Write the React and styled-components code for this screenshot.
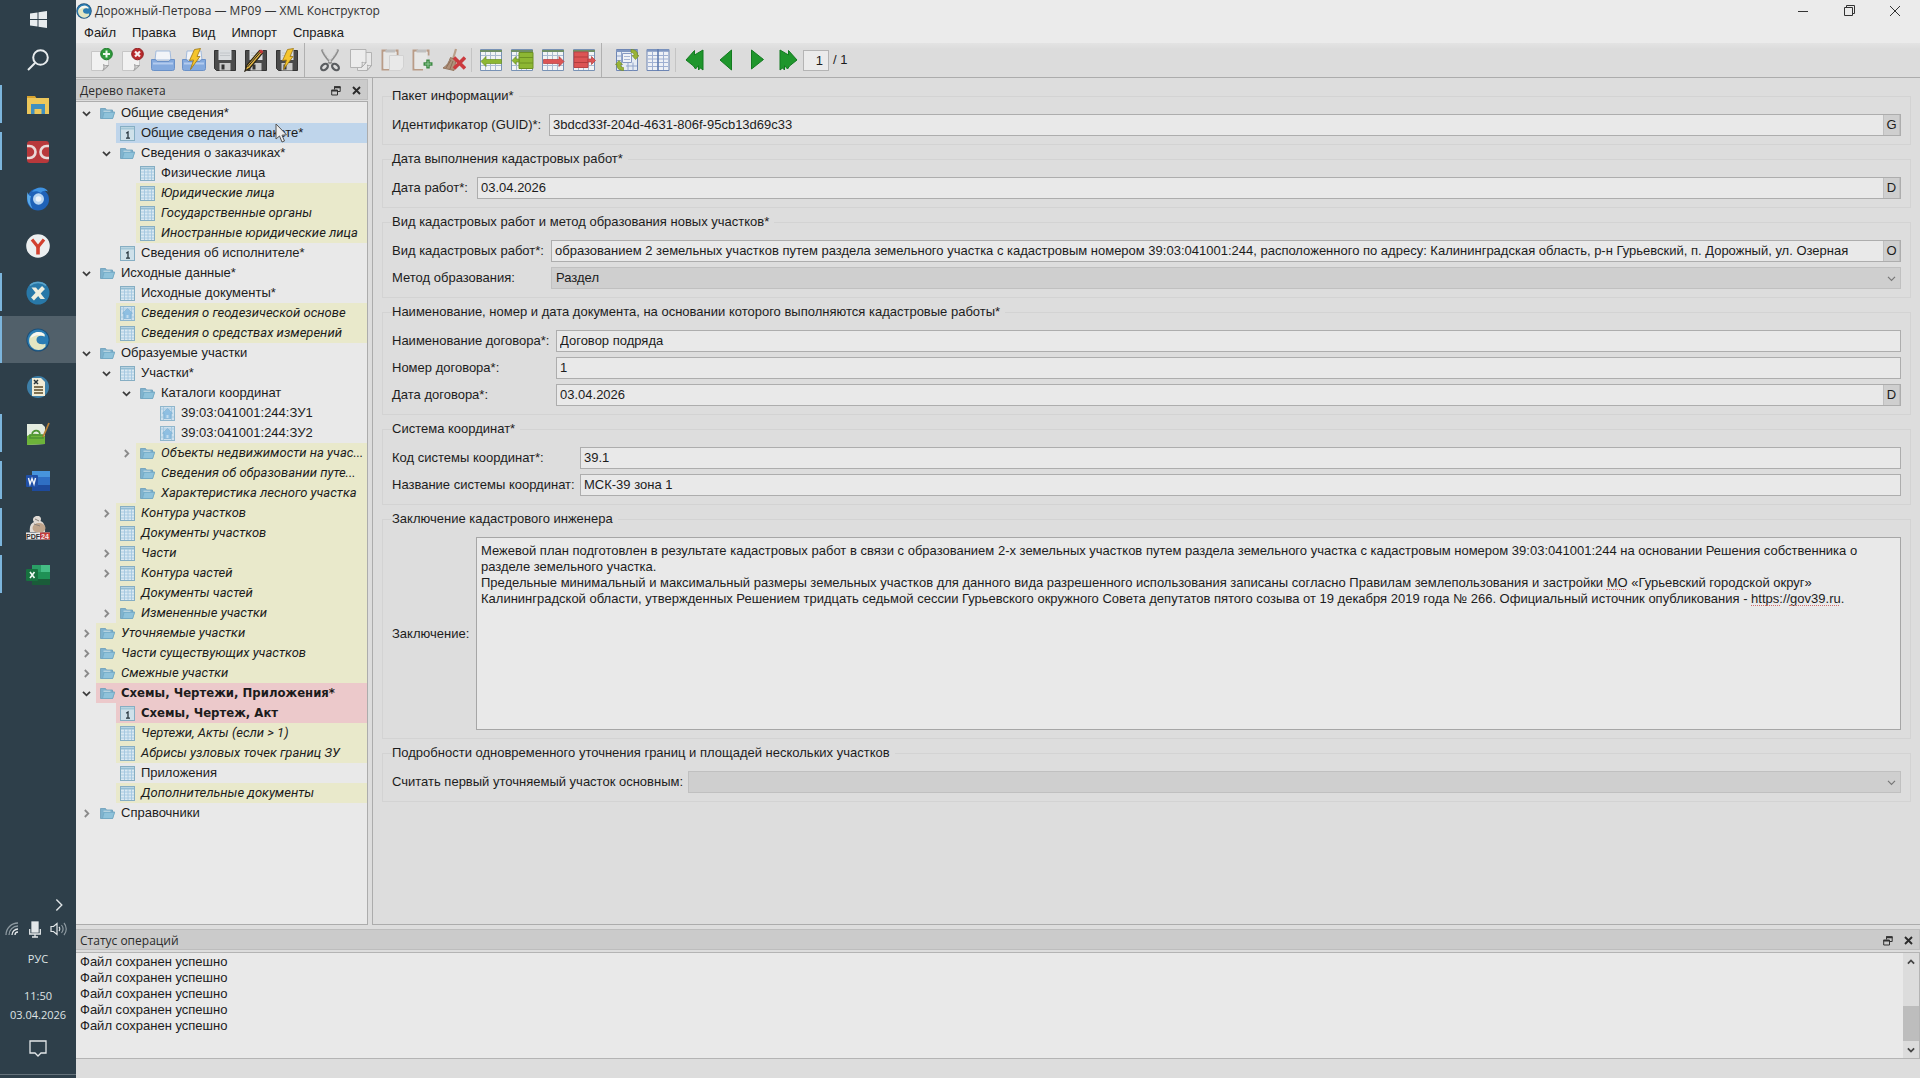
import React, { useState } from "react";
import styled, { createGlobalStyle, css } from "styled-components";

const GlobalStyle = createGlobalStyle`
  * {
    box-sizing: border-box;
  }
  body {
    margin: 0;
    background: #dddddd;
    color: #1c1c1c;
    font-family: "Liberation Sans", Arial, sans-serif;
    font-size: 13px;
    line-height: 16px;
  }
  button, input, select, textarea {
    font: inherit;
    color: inherit;
    margin: 0;
  }
  button {
    border: 0;
    padding: 0;
    background: none;
  }
  svg {
    display: block;
    flex: none;
  }
`;

const Desktop = styled.div`
  display: flex;
  height: 100vh;
  overflow: hidden;
`;

/* ---------- taskbar ---------- */

const Taskbar = styled.nav`
  width: 76px;
  flex: none;
  display: flex;
  flex-direction: column;
  background: #2e3f4a;
  color: #dfe3e5;
  font-family: "Open Sans", "Noto Sans", sans-serif;
  font-size: 11px;
`;

const TaskButton = styled.button`
  position: relative;
  width: 100%;
  height: ${(p) => p.$height || 47}px;
  display: flex;
  align-items: center;
  justify-content: center;
  background: ${(p) => (p.$state === "active" ? "#51606a" : "transparent")};

  ${(p) =>
    p.$state &&
    css`
      &::before {
        content: "";
        position: absolute;
        left: 0;
        top: ${p.$state === "active" ? 0 : 4}px;
        bottom: ${p.$state === "active" ? 0 : 5}px;
        width: 2px;
        background: #7cb5dc;
      }
    `}
`;

const Tray = styled.div`
  margin-top: auto;
  display: flex;
  flex-direction: column;
  align-items: center;
  padding-bottom: 10px;
  border-bottom: 1px solid #64717a;
  margin-bottom: 3px;
`;

const TrayMore = styled.button`
  align-self: flex-end;
  margin-right: 10px;
  height: 16px;
`;

const TrayIcons = styled.div`
  width: 100%;
  height: 32px;
  display: flex;
  align-items: center;
  justify-content: space-between;
  padding: 0 9px 0 5px;
`;

const Lang = styled.button`
  height: 28px;
`;

const Clock = styled.div`
  display: flex;
  flex-direction: column;
  align-items: center;
  gap: 3px;
  padding: 15px 0 9px;
`;

/* ---------- window frame ---------- */

const Window = styled.div`
  flex: 1;
  min-width: 0;
  display: flex;
  flex-direction: column;
`;

const TitleBar = styled.header`
  height: 21px;
  display: flex;
  align-items: center;
  gap: 3px;
  background: #ebebeb;
  font-family: "Open Sans", "Noto Sans", sans-serif;
  font-size: 12px;
  color: #333;
`;

const WindowButtons = styled.div`
  display: flex;
  margin-left: auto;
  padding-right: 2px;

  button {
    width: 46px;
    height: 20px;
    display: grid;
    place-items: center;
  }
`;

const MenuBar = styled.nav`
  height: 22px;
  display: flex;
  background: #ebebeb;

  button {
    padding: 1px 8px 0;
  }
`;

const Toolbar = styled.div`
  height: 35px;
  display: flex;
  align-items: center;
  padding-left: 9px;
  background: linear-gradient(#e3e3e3, #dcdcdc 6px);
  border-bottom: 1px solid #acacac;
`;

const Tool = styled.button`
  width: 31px;
  height: 31px;
  display: grid;
  place-items: center;
`;

const Divider = styled.span`
  width: 1px;
  height: ${(p) => (p.$tall ? 34 : 24)}px;
  margin: 0 ${(p) => (p.$tall ? 9 : 3)}px 0 2px;
  background: ${(p) => (p.$tall ? "#b0b0b0" : "#c4c4c4")};
`;

const PageBox = styled.label`
  display: flex;
  align-items: center;
  gap: 4px;
  font-size: 13px;

  input {
    width: 26px;
    height: 21px;
    padding: 0 5px;
    text-align: right;
    background: #ebebeb;
    border: 1px solid #b4b4b4;
  }
`;

const Workspace = styled.div`
  flex: 1;
  min-height: 0;
  display: flex;
  gap: 4px;
`;

const Dock = styled.section`
  display: flex;
  flex-direction: column;
  gap: 1px;
  ${(p) =>
    p.$side
      ? css`
          width: 292px;
          flex: none;
          padding-top: 1px;
        `
      : css`
          height: 130px;
          flex: none;
          margin-top: 4px;
        `}
`;

const DockTitle = styled.div`
  height: 21px;
  flex: none;
  display: flex;
  align-items: center;
  padding: 2px 0 0 4px;
  background: #cbcbcb;
  border: 1px solid #bdbdbd;
  border-left: 0;
  font-family: "Open Sans", "Noto Sans", sans-serif;
  font-size: 12px;
  color: #2b2b2b;

  span {
    flex: 1;
  }
  button {
    width: 21px;
    height: 16px;
    display: grid;
    place-items: center;
  }
`;

/* ---------- tree ---------- */

const Tree = styled.ul`
  flex: 1;
  min-height: 0;
  margin: 0;
  padding: 1px 0 0;
  list-style: none;
  overflow: hidden;
  background: #e9e9e9;
  border: 1px solid #acacac;
  border-left: 0;
`;

const TreeItem = styled.li`
  height: 20px;
  display: flex;
  padding-left: ${(p) => p.$level * 20}px;
`;

const Toggle = styled.button`
  width: 20px;
  flex: none;
  display: grid;
  place-items: center;
`;

const tones = {
  optional: css`
    background: #e9e9cb;
    font-family: Roboto, "Liberation Sans", sans-serif;
    font-style: italic;
  `,
  selected: css`
    background: #bfd5eb;
  `,
  error: css`
    background: #ecc9cb;
    font-family: "DejaVu Sans Condensed", "DejaVu Sans", sans-serif;
    font-weight: bold;
  `,
};

const TreeCell = styled.span`
  flex: 1;
  min-width: 0;
  display: flex;
  align-items: center;
  gap: 6px;
  padding-left: 4px;
  white-space: nowrap;
  overflow: hidden;
  ${(p) => tones[p.$tone]}
`;

/* ---------- form ---------- */

const FormPane = styled.main`
  flex: 1;
  min-width: 0;
  display: flex;
  flex-direction: column;
  gap: 6px;
  padding: 10px 9px 0;
  background: #dddddd;
  border-left: 1px solid #acacac;
  border-bottom: 1px solid #acacac;
`;

const Group = styled.fieldset`
  margin: 0;
  min-width: 0;
  padding: 10px 9px 8px;
  border: 1px solid #d3d3d3;
`;

const Legend = styled.legend`
  padding: 0 5px 0 0;
`;

const Fields = styled.div`
  display: grid;
  grid-template-columns: ${(p) => p.$label}px 1fr;
  row-gap: 5px;
  align-items: center;
`;

const Field = styled.div`
  height: 22px;
  display: flex;
  background: #e9e9e9;
  border: 1px solid #adadad;

  input {
    flex: 1;
    min-width: 0;
    padding: 0 3px;
    border: 0;
    background: none;
    outline: none;
  }
  button {
    width: 17px;
    background: #cfcfcf;
    border: 1px solid #c0c0c0;
    border-width: 0 1px;
  }
`;

const SelectBox = styled.div`
  position: relative;

  select {
    width: 100%;
    height: 22px;
    display: block;
    padding: 0 20px 0 4px;
    appearance: none;
    background: #cfcfcf;
    border: 1px solid #c0c0c0;
    border-radius: 0;
    opacity: 1;
  }
  svg {
    position: absolute;
    right: 5px;
    top: 7px;
    pointer-events: none;
  }
`;

const NoteBox = styled.div`
  position: relative;

  textarea {
    width: 100%;
    height: 193px;
    display: block;
    padding: 5px 4px;
    resize: none;
    outline: none;
    background: #e9e9e9;
    border: 1px solid #a6a6a6;
    border-radius: 0;
  }
`;

const SpellMark = styled.i`
  position: absolute;
  left: ${(p) => p.$left}px;
  top: ${(p) => p.$line * 16 + 20}px;
  width: ${(p) => p.$width}px;
  border-bottom: 1px dotted #d06a6a;
  pointer-events: none;
`;

/* ---------- log ---------- */

const LogBox = styled.div`
  flex: 1;
  min-height: 0;
  display: flex;
  margin-top: 1px;
  background: #e9e9e9;
  border: 1px solid #b4b4b4;
  border-left: 0;
`;

const Log = styled.ul`
  flex: 1;
  margin: 0;
  padding: 1px 4px;
  list-style: none;
`;

const ScrollBar = styled.div`
  width: 16px;
  display: flex;
  flex-direction: column;
  background: #dcdcdc;

  button {
    height: 17px;
    display: grid;
    place-items: center;
  }
`;

const Thumb = styled.div`
  height: 35px;
  margin-top: auto;
  background: #bdbdbd;
`;

const StatusBar = styled.footer`
  height: 19px;
  flex: none;
  background: #dddddd;
`;

const Pointer = styled.svg`
  position: absolute;
  left: 275px;
  top: 123px;
`;

/* ---------- small icons ---------- */

const Chevron = ({ dir = "down", size = 9, color = "#444", weight = 2 }) => {
  const turn = { down: 0, right: -90, up: 180 }[dir];
  return (
    <svg width={size} height={size} viewBox="0 0 9 9" fill="none">
      <path d="M1 2.8 4.5 6.3 8 2.8" stroke={color} strokeWidth={weight} transform={`rotate(${turn} 4.5 4.5)`} />
    </svg>
  );
};

const FloatIcon = () => (
  <svg width="10" height="10" viewBox="0 0 10 10" fill="none" stroke="#333">
    <path d="M3.5 3.5V.8h5.7v4.7H6.8" />
    <path d="M3 1.2h6.5M.5 4.6h6" strokeWidth="2" />
    <path d="M.7 4v5h5.8V4" />
  </svg>
);

const CrossIcon = () => (
  <svg width="9" height="9" viewBox="0 0 9 9" stroke="#2b2b2b" strokeWidth="1.9">
    <path d="M1 1l7 7M8 1 1 8" />
  </svg>
);

const FolderIcon = () => (
  <svg width="15" height="15" viewBox="0 0 15 15">
    <path d="M.5 12.5v-10h5l1 1.5h6V6h2L12.5 12.5z" fill="#7fb2cd" stroke="#6a9db9" strokeWidth=".8" />
    <path d="M2.5 12.5 4 6.3h10.6l-2 6.2z" fill="#8fc2da" stroke="#6fa6c2" strokeWidth=".7" />
    <path d="M3.5 5.2h7" stroke="#cfe2ea" />
  </svg>
);

const TableIcon = () => (
  <svg width="15" height="15" viewBox="0 0 15 15">
    <rect x=".5" y=".5" width="14" height="14" fill="#dbe9f2" stroke="#86aec3" />
    <path d="M1 2.5h13" stroke="#93bdd2" strokeWidth="2" />
    <path d="M4.5 3v11M8 3v11M11.5 3v11M1 6h13M1 9h13M1 12h13" stroke="#a3c6e0" strokeWidth=".9" />
  </svg>
);

const PageIcon = () => (
  <svg width="15" height="15" viewBox="0 0 15 15">
    <rect x=".5" y=".5" width="14" height="14" fill="#cfe1ea" stroke="#86aec3" />
    <path d="M1 2.5h13" stroke="#a5c8d8" strokeWidth="2" />
    <path d="M6.2 7.2 8 6v6M6 12.2h4" stroke="#26343c" strokeWidth="1.3" fill="none" />
  </svg>
);

const HouseIcon = () => (
  <svg width="15" height="15" viewBox="0 0 15 15">
    <rect x=".5" y=".5" width="14" height="14" fill="#cfe1ee" stroke="#8fb6cc" />
    <path d="M1 3h13M1 11h13M3.5 1v13M11.5 1v13" stroke="#a6cae2" />
    <path d="M7.5 2.500 12.500 7.200h-1.500V12.500h-7V7.200H2.500z" fill="#8fbfe2" stroke="#7bacd0" strokeWidth=".6" />
    <path d="M6.500 9h2v3h-2z" fill="#c3dcee" />
  </svg>
);

const CLogo = ({ size }) => (
  <svg width={size} height={size} viewBox="0 0 24 24">
    <circle cx="12" cy="12" r="11.6" fill="#1c4f78" />
    <circle cx="12" cy="12" r="10.6" fill="#2b7db4" />
    <path d="M18.500 6.500C14 2 5 4 3.200 11c-1 6 3.500 11 9.500 11 2.500 0 5-1 6.800-3.500v-2.800c-5 1.500-9-.2-9-3.900s3.800-5 8-3.300z" fill="#e3e6c2" />
    <path d="M18.500 6.500C14 2 6.500 4 4.500 10c5-2 5-3 8.500-2.500 2-.5 3.500-.3 5.500.9z" fill="#f6f7f2" />
  </svg>
);

/* ---------- toolbar icons, 24x24 ---------- */

const Icon24 = ({ children }) => (
  <svg width="24" height="24" viewBox="0 0 24 24">
    {children}
  </svg>
);

const Paper = () => (
  <>
    <path d="M2.500 3.500h17V18l-5 4.500h-12z" fill="#f1f1f1" stroke="#c6c6c6" />
    <path d="M19.500 17.500c-2 .5-4 0-5-1 .8 2 .6 4.500-.8 6z" fill="#d6d6d6" stroke="#9d9d9d" />
  </>
);

const Bolt = () => (
  <path d="M12.500 1.500 18.500.5 15 8.500h3L8.500 21.500 11.500 12 7.500 12.500z" fill="#f5c52d" stroke="#9b7413" strokeWidth=".8" />
);

const Tray24 = () => (
  <>
    <path d="M4 12 5 3h14l1 9z" fill="#f2f4f8" stroke="#a3bbdc" />
    <path d="M.5 11.500h4l1.500 2h12l1.500-2h4v9a2 2 0 0 1-2 2h-19a2 2 0 0 1-2-2z" fill="#84aade" stroke="#6a91c8" />
    <path d="M2 15.500h20" stroke="#b2cbee" strokeWidth="2" />
  </>
);

const Floppy = () => (
  <>
    <path d="M1.500 2.500h21v20h-19l-2-2z" fill="#4a4a4a" stroke="#333" />
    <path d="M5.500 2h13v10h-13z" fill="#dadde0" />
    <path d="M7 5h10M7 7.500h10" stroke="#c2c6ca" />
    <path d="M6.500 15h11v7.500h-11z" fill="#c9c9c9" />
    <path d="M8.500 16.500h3v5h-3z" fill="#333" />
  </>
);

const Clipboard = () => (
  <>
    <path d="M15.500 2.500h2v5M7 2.500H2.500v19H12" fill="none" stroke="#b99c87" strokeWidth="2" />
    <path d="M3.500 4h13v17h-13z" fill="#e7e7e6" />
    <path d="M5.500 1.500h9.500v3H5.500z" fill="#c0c0c0" />
  </>
);

const Sheet = ({ children }) => (
  <>
    <path d="M1.500 1.500h21v21h-21z" fill="#f2f4f5" stroke="#7892b5" />
    <path d="M1 3h22" stroke="#6f8f66" strokeWidth="2" />
    <path d="M6.500 4v18M11.500 4v18M16.500 4v18M2 7.500h20M2 12.500h20M2 17.500h20" stroke="#abbbd0" />
    {children}
  </>
);

const toolGroups = [
  [
    {
      name: "Новый",
      art: (
        <>
          <Paper />
          <circle cx="17.500" cy="6" r="5.800" fill="#2f9a3c" stroke="#1f7a2b" />
          <path d="M17.500 2.500v7M14 6h7" stroke="#eef8ee" strokeWidth="2" />
        </>
      ),
    },
    {
      name: "Закрыть",
      art: (
        <>
          <Paper />
          <circle cx="17.500" cy="6" r="5.800" fill="#b92a2c" stroke="#8d1c1e" />
          <path d="M15 3.500l5 5M20 3.500l-5 5" stroke="#f8eeee" strokeWidth="2.200" />
        </>
      ),
    },
    { name: "Открыть", art: <Tray24 /> },
    { name: "Быстро открыть", art: <><Tray24 /><Bolt /></> },
    { name: "Сохранить", art: <Floppy /> },
    {
      name: "Сохранить как",
      art: (
        <>
          <Floppy />
          <path d="M1 23 3 17 15.500 2.500l3 2.500L6 20z" fill="#e3b541" stroke="#2b2415" strokeWidth="1.200" />
          <path d="M14.500 3.500 17 1.500l2.500 2-2 2.500z" fill="#c2383a" />
          <path d="M3.500 19 16 4.500" stroke="#222" />
        </>
      ),
    },
    { name: "Быстро сохранить", art: <><Floppy /><Bolt /></> },
  ],
  [
    {
      name: "Вырезать",
      art: (
        <>
          <path d="M4 1.500c1 5 5 9 9.500 14M20 1.500c-1 5-5 9-9.500 14" stroke="#8e8e8e" strokeWidth="2.200" fill="none" />
          <path d="M5 2c2 5 5 8 8 12M19 2c-2 5-5 8-8 12" stroke="#d8d8d8" fill="none" />
          <ellipse cx="6.500" cy="19" rx="3.800" ry="2.600" transform="rotate(-38 6.500 19)" fill="none" stroke="#5a5d60" strokeWidth="2.200" />
          <ellipse cx="17.500" cy="19" rx="3.800" ry="2.600" transform="rotate(38 17.500 19)" fill="none" stroke="#5a5d60" strokeWidth="2.200" />
        </>
      ),
    },
    {
      name: "Копировать",
      art: (
        <>
          <path d="M8.500 4.500h14v13L18 22.500H8.500z" fill="#e9e9e9" stroke="#b3b3b3" />
          <path d="M1.500 1.500h15.500v13L12.500 19.500h-11z" fill="#ececec" stroke="#b3b3b3" />
          <path d="M17 14.500c-2 .5-3 .3-4-.5.5 2 .3 4-.5 5.500zM22.500 17.500c-2 .5-3 .3-4-.5.5 2 .3 4-.5 5.500z" fill="#f6f6f6" stroke="#a8a8a8" />
        </>
      ),
    },
    {
      name: "Вставить",
      art: (
        <>
          <Clipboard />
          <path d="M9.500 7.500h14V19l-3 3.500h-11z" fill="#e9e9e9" stroke="#d2d2d2" />
        </>
      ),
    },
    {
      name: "Вставить как новый",
      art: (
        <>
          <Clipboard />
          <path d="M17 11.500v9M12.500 16h9" stroke="#3f8b45" strokeWidth="3.500" />
          <path d="M17 13v6M14 16h6" stroke="#8fc893" />
        </>
      ),
    },
    {
      name: "Очистить",
      art: (
        <>
          <path d="M14 1l-3 10" stroke="#b9a08a" strokeWidth="2.200" />
          <path d="M8.500 9.500 14 12l-2 10.500L1 20c4-2 6-6 7.500-10.500z" fill="#b0917a" stroke="#94765f" />
          <path d="M9 12 4 20M11 13 8 21" stroke="#8d6d57" />
          <path d="M12 9.500 23 20.500M23 9.500 12 20.500" stroke="#cb3a3e" strokeWidth="3.600" />
        </>
      ),
    },
  ],
  [
    {
      name: "Вставить строку",
      art: (
        <Sheet>
          <path d="M2 13.500 7 8.500v3h15.500v4H7v3z" fill="#8db733" stroke="#6c9122" strokeWidth=".7" />
        </Sheet>
      ),
    },
    {
      name: "Добавить строки",
      art: (
        <Sheet>
          <path d="M9 4.500h14v16H9z" fill="#8db733" stroke="#6c9122" />
          <path d="M9 9.500h14M9 15h14" stroke="#6c9122" />
          <path d="M2 12.500 6 8.500v2.500h3v3H6v2.500z" fill="#8db733" stroke="#6c9122" strokeWidth=".7" />
        </Sheet>
      ),
    },
    {
      name: "Удалить строку",
      art: (
        <Sheet>
          <path d="M23 13.500 18 8.500v3H2.500v4H18v3z" fill="#dc5454" stroke="#b23d3d" strokeWidth=".7" />
        </Sheet>
      ),
    },
    {
      name: "Удалить строки",
      art: (
        <Sheet>
          <path d="M2 4h14v15.500H2z" fill="#dc5454" stroke="#b94545" />
          <path d="M2 9h14M2 14.500h14" stroke="#b23d3d" />
          <path d="M23.500 12.500l-4-4V11H16v3h3.500v2.500z" fill="#dc5454" stroke="#b23d3d" strokeWidth=".7" />
        </Sheet>
      ),
    },
  ],
  [
    {
      name: "Обновить таблицу",
      art: (
        <>
          <path d="M1.500 1.500h21v21h-21z" fill="#e6ebf3" stroke="#6e86b4" />
          <path d="M1 3h22" stroke="#7f96c0" strokeWidth="2" />
          <path d="M6.500 4v18M2 8h5M2 12.500h5M11 18h11M13 14.500v8M18 14.500v8" stroke="#92a5cb" />
          <path d="M7.500 5.500h9v9h-9z" fill="#f1f3f7" stroke="#8699c2" />
          <path d="M9 8.500h6M9 11.500h6" stroke="#a9b7d5" />
          <path d="M16 1.500c5 0 7 3 6.500 6H24l-3.500 4-3.500-4h2c0-2-1-3-3-3z" fill="#9ab436" stroke="#71881f" strokeWidth=".6" />
          <path d="M8.500 22.500c-5 0-7-3-6.500-6H.5L4 12.500l3.500 4h-2c0 2 1 3 3 3z" fill="#9ab436" stroke="#71881f" strokeWidth=".6" />
        </>
      ),
    },
    {
      name: "Таблица",
      art: (
        <>
          <path d="M1 1.500h22v21H1z" fill="#eef1f6" stroke="#6e86b4" />
          <path d="M1 2.500h22" stroke="#7f96c0" strokeWidth="2.500" />
          <path d="M6.500 4v18M17.500 4v18M2 7.500h20M2 11h20M2 14.500h20M2 18.500h20" stroke="#9fb0d2" />
          <path d="M12 1v22" stroke="#5f7bb0" strokeWidth="1.600" />
        </>
      ),
    },
  ],
  [
    { name: "Первая", art: <path d="M11.500 2.500v4.500l8.500-5v20l-2.500-2-2 2v-4.500l-3 3.500-2-3L3 12z" fill="#1f962c" stroke="#137a20" strokeLinejoin="round" /> },
    { name: "Предыдущая", art: <path d="M17.500 2v20L6 12z" fill="#1f962c" stroke="#137a20" strokeLinejoin="round" /> },
    { name: "Следующая", art: <path d="M6.500 2v19L18.500 11.500z" fill="#1f962c" stroke="#137a20" strokeLinejoin="round" /> },
    { name: "Последняя", art: <path d="M12.500 2.500v4.500L4 2v20l2.500-2 2 2v-4.500l3 3.500 2-3L21 12z" fill="#1f962c" stroke="#137a20" strokeLinejoin="round" /> },
  ],
];

/* ---------- taskbar icons ---------- */

const StartIcon = () => (
  <svg width="17" height="17" viewBox="0 0 17 17" fill="#e8ecee">
    <path d="M0 2.500 7.500 1.500V8H0zM8.500 1.300 17 0v8H8.500zM0 9h7.500v6.500L0 14.500zM8.500 9H17v8l-8.500-1.300z" />
  </svg>
);

const SearchIcon = () => (
  <svg width="22" height="22" viewBox="0 0 22 22" fill="none" stroke="#e8ecee" strokeWidth="2">
    <circle cx="13.500" cy="8.500" r="7.300" />
    <path d="M8 14 1 21" />
  </svg>
);

const tasks = [
  {
    name: "Проводник",
    state: "open",
    art: (
      <>
        <path d="M1 3h8l2 3H1z" fill="#d8a32f" />
        <path d="M1 5h22v16H1z" fill="#ecc75b" />
        <path d="M5 11h14v10h-3.500v-5h-7v5H5z" fill="#3f8fc0" />
      </>
    ),
  },
  {
    name: "DC",
    state: "open",
    art: (
      <>
        <rect x="1" y="1" width="22" height="22" rx="3" fill="#b8383b" />
        <path d="M1 6h2.500a6 6 0 0 1 0 12H1M23 6h-2.500a6 6 0 0 0 0 12H23" fill="none" stroke="#ead9d8" strokeWidth="2.600" />
      </>
    ),
  },
  {
    name: "Thunderbird",
    art: (
      <>
        <circle cx="12" cy="12.500" r="11" fill="#1f62b8" />
        <path d="M6 5C10-1 19-1 22 4.500c-3-1.500-6-.5-7 1.500-3-2-6-2-9-1z" fill="#3f93e2" />
        <path d="M1.500 5c-1 6-.5 12 5 16.500C4 17 3.500 13 5 9 3 9 2 7 1.500 5z" fill="#5aaae9" />
        <ellipse cx="12.500" cy="12" rx="5.500" ry="5.800" fill="#b9d6f2" />
        <circle cx="12.500" cy="12" r="2.800" fill="#eef4fa" />
      </>
    ),
  },
  {
    name: "Yandex",
    art: (
      <>
        <circle cx="12" cy="12" r="11.800" fill="#eceff0" />
        <path d="M6 5.500l6 7.500 6-7.500" fill="none" stroke="#d2402f" strokeWidth="3.200" />
        <path d="M12 12v8.500" stroke="#d2402f" strokeWidth="3.600" />
      </>
    ),
  },
  {
    name: "X",
    state: "open",
    art: (
      <>
        <circle cx="12" cy="12" r="11.500" fill="#2878a8" />
        <path d="M5.500 6.500H10l9 11.500h-4.500z" fill="#efeede" />
        <path d="M17.500 6.500 6.500 18" stroke="#efeede" strokeWidth="4" />
        <path d="M4 4.500c4-4 12-4 16 0" fill="none" stroke="#5ba4cb" strokeWidth="1.500" />
      </>
    ),
  },
  { name: "XML Конструктор", state: "active", art: <CLogo size="24" /> },
  {
    name: "Отчеты",
    art: (
      <>
        <circle cx="12" cy="12" r="11" fill="#3d7fa8" />
        <path d="M6 3h9l4 4v14H6z" fill="#f1ecd6" />
        <path d="M8 5l4 4M12 5 8 9" stroke="#28343a" strokeWidth="1.500" />
        <path d="M8 12h9M8 15h9M8 18h9" stroke="#5a4a28" strokeWidth="1.600" />
      </>
    ),
  },
  {
    name: "Карта",
    state: "open",
    art: (
      <>
        <path d="M1 2h15l3 3v17L1 23z" fill="#e4ece0" />
        <path d="M1 14c5-3 10-3 18 0v8L1 23z" fill="#6db33a" />
        <path d="M4 13h13v3H4zM6 12c1-4 7-5 8 0" fill="none" stroke="#4d9433" strokeWidth="1.600" />
        <path d="M23 1 17 15" stroke="#b98136" strokeWidth="1.800" />
      </>
    ),
  },
  {
    name: "Word",
    state: "open",
    art: (
      <>
        <path d="M6 2h18v20H6z" fill="#2f6fc4" />
        <path d="M6 2h18v6H6z" fill="#4794dc" />
        <path d="M6 16h18v6H6z" fill="#1d4a9c" />
        <rect y="6" width="12" height="12" rx="1" fill="#1f4fa6" />
        <path d="M2.500 9l1.500 6 2-5.500L8 15l1.500-6" fill="none" stroke="#f0f4fa" strokeWidth="1.400" />
      </>
    ),
  },
  {
    name: "PDF24",
    state: "open",
    art: (
      <>
        <path d="M10 0c4-1 6 2 4.500 5 3 1 5 4 4.500 11H4c-1-5 1-9 4-10-2-2-1-5 2-6z" fill="#e0dad4" />
        <ellipse cx="13" cy="12" rx="6.500" ry="5" fill="#bfa48b" />
        <path d="M9 3l4 2M8 8l6 2" stroke="#8a8079" />
        <rect y="16.500" width="24" height="7" fill="#e8e8e8" />
        <rect x="14" y="16.500" width="10" height="7" fill="#c23a3a" />
        <text x="0" y="23" fontSize="7" fontWeight="bold" fontFamily="Liberation Sans" fill="#2e2e2e">PDF</text>
        <text x="15" y="23" fontSize="7" fontWeight="bold" fontFamily="Liberation Sans" fill="#f3e8e8">24</text>
      </>
    ),
  },
  {
    name: "Excel",
    state: "open",
    art: (
      <>
        <path d="M6 2h18v20H6z" fill="#1f9155" />
        <path d="M6 2h9v7H6z" fill="#2a9f66" />
        <path d="M15 2h9v7h-9z" fill="#45bd85" />
        <path d="M6 16h18v6H6z" fill="#1a5c39" />
        <rect y="6" width="12" height="12" rx="1" fill="#17713f" />
        <path d="M4 9l4.500 6M8.500 9 4 15" stroke="#f0faf4" strokeWidth="1.600" />
      </>
    ),
  },
];

const treeIcons = { folder: FolderIcon, table: TableIcon, page: PageIcon, house: HouseIcon };

// [level, arrow, icon, tone, text]
const treeRows = [
  [0, "down", "folder", "", "Общие сведения*"],
  [1, "", "page", "selected", "Общие сведения о пакете*"],
  [1, "down", "folder", "", "Сведения о заказчиках*"],
  [2, "", "table", "", "Физические лица"],
  [2, "", "table", "optional", "Юридические лица"],
  [2, "", "table", "optional", "Государственные органы"],
  [2, "", "table", "optional", "Иностранные юридические лица"],
  [1, "", "page", "", "Сведения об исполнителе*"],
  [0, "down", "folder", "", "Исходные данные*"],
  [1, "", "table", "", "Исходные документы*"],
  [1, "", "house", "optional", "Сведения о геодезической основе"],
  [1, "", "table", "optional", "Сведения о средствах измерений"],
  [0, "down", "folder", "", "Образуемые участки"],
  [1, "down", "table", "", "Участки*"],
  [2, "down", "folder", "", "Каталоги координат"],
  [3, "", "house", "", "39:03:041001:244:ЗУ1"],
  [3, "", "house", "", "39:03:041001:244:ЗУ2"],
  [2, "right", "folder", "optional", "Объекты недвижимости на учас..."],
  [2, "", "folder", "optional", "Сведения об образовании путе..."],
  [2, "", "folder", "optional", "Характеристика лесного участка"],
  [1, "right", "table", "optional", "Контура участков"],
  [1, "", "table", "optional", "Документы участков"],
  [1, "right", "table", "optional", "Части"],
  [1, "right", "table", "optional", "Контура частей"],
  [1, "", "table", "optional", "Документы частей"],
  [1, "right", "folder", "optional", "Измененные участки"],
  [0, "right", "folder", "optional", "Уточняемые участки"],
  [0, "right", "folder", "optional", "Части существующих участков"],
  [0, "right", "folder", "optional", "Смежные участки"],
  [0, "down", "folder", "error", "Схемы, Чертежи, Приложения*"],
  [1, "", "page", "error", "Схемы, Чертеж, Акт"],
  [1, "", "table", "optional", "Чертежи, Акты (если > 1)"],
  [1, "", "table", "optional", "Абрисы узловых точек границ ЗУ"],
  [1, "", "table", "", "Приложения"],
  [1, "", "table", "optional", "Дополнительные документы"],
  [0, "right", "folder", "", "Справочники"],
];

const conclusion =
  "Межевой план подготовлен в результате кадастровых работ в связи с образованием 2-х земельных участков путем раздела земельного участка с кадастровым номером 39:03:041001:244 на основании Решения собственника о разделе земельного участка.\n" +
  "Предельные минимальный и максимальный размеры земельных участков для данного вида разрешенного использования записаны согласно Правилам землепользования и застройки МО «Гурьевский городской округ» Калининградской области, утвержденных Решением тридцать седьмой сессии Гурьевского окружного Совета депутатов пятого созыва от 19 декабря 2019 года № 266. Официальный источник опубликования - https://gov39.ru.";

const TextField = ({ id, label, value, button }) => {
  const [text, setText] = useState(value);
  return (
    <>
      <label htmlFor={id}>{label}</label>
      <Field>
        <input id={id} value={text} onChange={(e) => setText(e.target.value)} />
        {button && <button type="button">{button}</button>}
      </Field>
    </>
  );
};

const SelectField = ({ id, label, value }) => (
  <>
    <label htmlFor={id}>{label}</label>
    <SelectBox>
      <select id={id} defaultValue={value}>
        <option>{value}</option>
      </select>
      <Chevron color="#777" weight={1.2} />
    </SelectBox>
  </>
);

const DockHeader = ({ children }) => (
  <DockTitle>
    <span>{children}</span>
    <button aria-label="Открепить">
      <FloatIcon />
    </button>
    <button aria-label="Закрыть панель">
      <CrossIcon />
    </button>
  </DockTitle>
);

export default function App() {
  const [note, setNote] = useState(conclusion);
  const [page, setPage] = useState("1");

  return (
    <Desktop>
      <GlobalStyle />
      <Taskbar>
        <TaskButton $height={38} aria-label="Пуск">
          <StartIcon />
        </TaskButton>
        <TaskButton $height={43} aria-label="Поиск">
          <SearchIcon />
        </TaskButton>
        {tasks.map((t) => (
          <TaskButton key={t.name} $state={t.state} aria-label={t.name}>
            <Icon24>{t.art}</Icon24>
          </TaskButton>
        ))}
        <Tray>
          <TrayMore aria-label="Скрытые значки">
            <Chevron dir="right" size={14} color="#dfe3e5" weight={0.9} />
          </TrayMore>
          <TrayIcons>
            <svg width="14" height="14" viewBox="0 0 14 14" fill="none" stroke="#8e9aa1" strokeWidth="1.300">
              <path d="M1 13A12 12 0 0 1 13 1M4 13a9 9 0 0 1 9-9" />
              <path d="M7 13a6 6 0 0 1 6-6M10 13a3 3 0 0 1 3-3" stroke="#e3e7e9" />
            </svg>
            <svg width="12" height="17" viewBox="0 0 12 17" fill="none" stroke="#e3e7e9" strokeWidth="1.300">
              <rect x="3" y="1" width="6" height="10" fill="#e3e7e9" />
              <path d="M.7 8v5h10.600V8M6 13v3M3 16h6" />
            </svg>
            <svg width="17" height="14" viewBox="0 0 17 14" fill="none" stroke="#e3e7e9" strokeWidth="1.200">
              <path d="M1 4.500h2.500L7 1.500v11L3.500 9.500H1zM9 5c1 1 1 3 0 4" />
              <path d="M11.500 3c2 2.500 2 5.500 0 8M14 1c3 3.500 3 8.500 0 12" stroke="#8e9aa1" />
            </svg>
          </TrayIcons>
          <Lang>РУС</Lang>
          <Clock>
            <span>11:50</span>
            <span>03.04.2026</span>
          </Clock>
          <TaskButton $height={32} aria-label="Уведомления">
            <svg width="18" height="17" viewBox="0 0 18 17" fill="none" stroke="#e3e7e9" strokeWidth="1.300">
              <path d="M1 1h16v12h-5l-3 3-3-3H1z" />
            </svg>
          </TaskButton>
        </Tray>
      </Taskbar>

      <Window>
        <TitleBar>
          <CLogo size="16" />
          <span>Дорожный-Петрова — МР09 — XML Конструктор</span>
          <WindowButtons>
            <button aria-label="Свернуть">
              <svg width="10" height="10" stroke="#333">
                <path d="M0 5.500h10" />
              </svg>
            </button>
            <button aria-label="Восстановить">
              <svg width="11" height="11" fill="none" stroke="#333">
                <path d="M.5 2.500h8v8h-8zM2.500 2.500v-2h8v8h-2" />
              </svg>
            </button>
            <button aria-label="Закрыть">
              <svg width="10" height="10" stroke="#333">
                <path d="M0 0l10 10M10 0 0 10" />
              </svg>
            </button>
          </WindowButtons>
        </TitleBar>
        <MenuBar>
          {["Файл", "Правка", "Вид", "Импорт", "Справка"].map((m) => (
            <button key={m}>{m}</button>
          ))}
        </MenuBar>
        <Toolbar>
          {toolGroups.map((group, i) => (
            <React.Fragment key={i}>
              {i > 0 && <Divider $tall={i % 2 === 1} />}
              {group.map((t) => (
                <Tool key={t.name} aria-label={t.name}>
                  <Icon24>{t.art}</Icon24>
                </Tool>
              ))}
            </React.Fragment>
          ))}
          <PageBox>
            <input aria-label="Страница" value={page} onChange={(e) => setPage(e.target.value)} />
            / 1
          </PageBox>
        </Toolbar>

        <Workspace>
          <Dock $side>
            <DockHeader>Дерево пакета</DockHeader>
            <Tree>
              {treeRows.map(([level, arrow, icon, tone, text]) => {
                const RowIcon = treeIcons[icon];
                return (
                  <TreeItem key={text} $level={level}>
                    {arrow ? (
                      <Toggle aria-label={text}>
                        <Chevron dir={arrow} color={arrow === "down" ? "#3c3c3c" : "#8a8a8a"} weight={1.8} />
                      </Toggle>
                    ) : (
                      <Toggle as="span" />
                    )}
                    <TreeCell $tone={tone}>
                      <RowIcon />
                      {text}
                    </TreeCell>
                  </TreeItem>
                );
              })}
            </Tree>
          </Dock>

          <FormPane>
            <Group>
              <Legend>Пакет информации*</Legend>
              <Fields $label={157}>
                <TextField id="guid" label="Идентификатор (GUID)*:" value="3bdcd33f-204d-4631-806f-95cb13d69c33" button="G" />
              </Fields>
            </Group>
            <Group>
              <Legend>Дата выполнения кадастровых работ*</Legend>
              <Fields $label={85}>
                <TextField id="workDate" label="Дата работ*:" value="03.04.2026" button="D" />
              </Fields>
            </Group>
            <Group>
              <Legend>Вид кадастровых работ и метод образования новых участков*</Legend>
              <Fields $label={159}>
                <TextField
                  id="workType"
                  label="Вид кадастровых работ*:"
                  value="образованием 2 земельных участков путем раздела земельного участка с кадастровым номером 39:03:041001:244, расположенного по адресу: Калининградская область, р-н Гурьевский, п. Дорожный, ул. Озерная"
                  button="O"
                />
                <SelectField id="method" label="Метод образования:" value="Раздел" />
              </Fields>
            </Group>
            <Group>
              <Legend>Наименование, номер и дата документа, на основании которого выполняются кадастровые работы*</Legend>
              <Fields $label={164}>
                <TextField id="contract" label="Наименование договора*:" value="Договор подряда" />
                <TextField id="contractNo" label="Номер договора*:" value="1" />
                <TextField id="contractDate" label="Дата договора*:" value="03.04.2026" button="D" />
              </Fields>
            </Group>
            <Group>
              <Legend>Система координат*</Legend>
              <Fields $label={188}>
                <TextField id="csCode" label="Код системы координат*:" value="39.1" />
                <TextField id="csName" label="Название системы координат:" value="МСК-39 зона 1" />
              </Fields>
            </Group>
            <Group>
              <Legend>Заключение кадастрового инженера</Legend>
              <Fields $label={84}>
                <label htmlFor="note">Заключение:</label>
                <NoteBox>
                  <textarea id="note" spellCheck={false} value={note} onChange={(e) => setNote(e.target.value)} />
                  <SpellMark $left={1130} $line={2} $width={20} />
                  <SpellMark $left={1275} $line={3} $width={29} />
                  <SpellMark $left={1313} $line={3} $width={50} />
                </NoteBox>
              </Fields>
            </Group>
            <Group>
              <Legend>Подробности одновременного уточнения границ и площадей нескольких участков</Legend>
              <Fields $label={296}>
                <SelectField id="mainParcel" label="Считать первый уточняемый участок основным:" value="" />
              </Fields>
            </Group>
          </FormPane>
        </Workspace>

        <Dock>
          <DockHeader>Статус операций</DockHeader>
          <LogBox>
            <Log>
              {[1, 2, 3, 4, 5].map((n) => (
                <li key={n}>Файл сохранен успешно</li>
              ))}
            </Log>
            <ScrollBar>
              <button aria-label="Вверх">
                <Chevron dir="up" size={8} />
              </button>
              <Thumb />
              <button aria-label="Вниз">
                <Chevron size={8} />
              </button>
            </ScrollBar>
          </LogBox>
        </Dock>
        <StatusBar />
      </Window>

      <Pointer width="13" height="20" viewBox="0 0 13 20">
        <path d="M1 1v15l3.500-3 2.500 6 2.500-1L7 12.200l4.500-.4z" fill="#ececec" stroke="#555" />
      </Pointer>
    </Desktop>
  );
}
